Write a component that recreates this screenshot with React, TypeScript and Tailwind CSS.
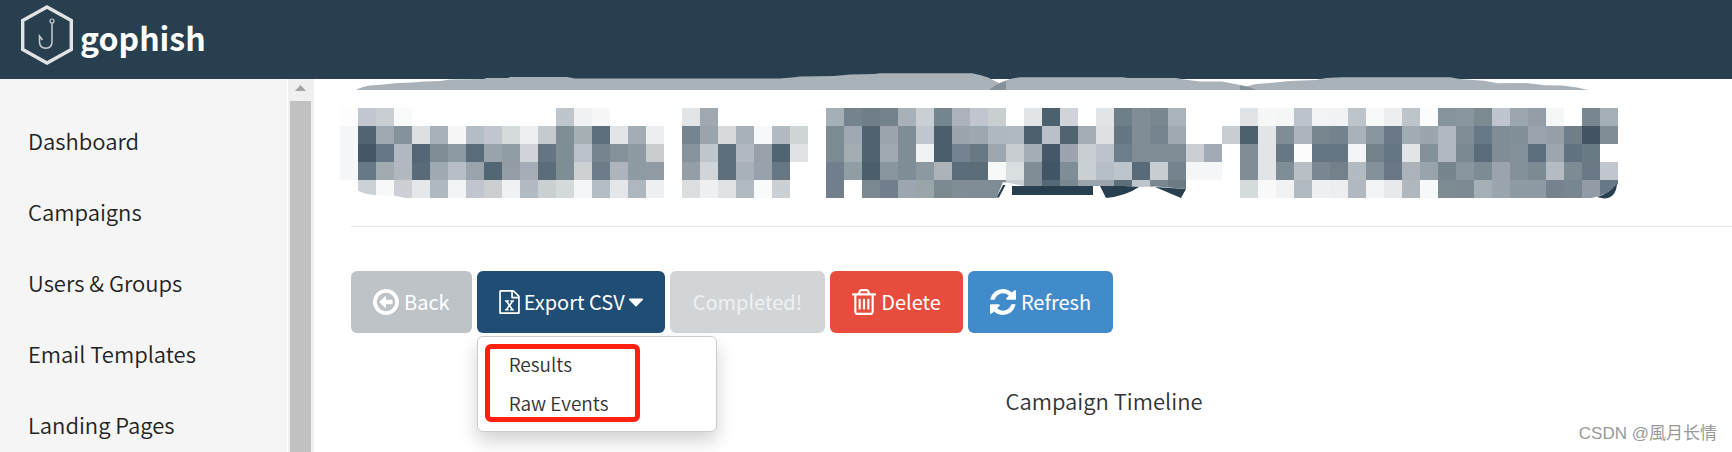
import React from "react";

const navItems = ["Dashboard", "Campaigns", "Users & Groups", "Email Templates", "Landing Pages"];

const CELL = 18;
const MOSAIC_X = 340;
const MOSAIC_Y = 108;

// One string per run of cells: [row, first column, colours]
const mosaic: [number, number, string][] = [
  [0, 0, "fdfdfd c2c7cf c9ced2 f9fbfa"],
  [0, 12, "bfc6cb f0f1f3 f7f7f7"],
  [0, 19, "e1e5e8 9da8b0"],
  [0, 27, "a4b0b5 75838e 6f7e88 74828e a8b0b8 cacfd3 768690 abb2ba c1c5ce c9ced1"],
  [0, 38, "e1e5e8 4d606d d0d4d9"],
  [0, 42, "e1e5e8 6f7f89 808d96 788790 aab2ba"],
  [0, 50, "e0e4e7 f6f8f8 f5f7f7 bcc3cb f2f3f5 f1f2f4 bdc5ca f8faf9 edeef0 bec5ca fbfdfc 87949d 8a969f 7c8a92 bfc5ce 9ba6af 939da7 f5f7f6"],
  [0, 69, "778691 a4b0b5"],
  [1, 0, "f6f7f9 536472 9ea8b1 85929b dce0e3 a8b0b8 f7f7f7 b5bdc4 c1c5ce d5dadd eeeff0 c4cacd 7f8d95 a6b1b6 5e707e e1e5e8 a2aeb4 edeeef"],
  [1, 19, "768490 99a4ab d6dadd a8b0b8 f7f8fa b3bbc2 cfd4d7"],
  [1, 27, "7d8b93 9fa8b2 506270 9ca5ae 7f8d96 bfc6cd 4b5e6c 9ca5ae 9da7b0 afb7c0 b0b9c0 4c606d b9c0c8 516370 a2adb3 dde1e4 667582 808d96 768490 9faab0"],
  [1, 49, "c8cdd1 4d606e e1e5e8 808d96 adb4bc 78868f 73828c a9b1b9 8996a0 6b7886 a0acb1 9ba5ae b1b8c1 808d96 677886 808d96 82909a 9aa3ae 969fa7 707e8a 425463 808d96"],
  [2, 0, "f6f7f9 445665 677786 b1b8bf 556776 808c95 8e9aa3 5a6b7a 99a3ab 919da4 d0d4d8 657582 7f8d95 bac1ca 768490 86929b 8e9ba3 c8cccf"],
  [2, 19, "87939d bfc7cc 5e707d b1b8c0 98a1a9 516472 dfe3e5"],
  [2, 27, "7d8b93 a2adb2 506270 a0a8b2 7f8d96 f0f2f4 4b5e6c 74838f 687984 9ca7b0 c8cdd1 a3aeb4 465867 9ca5af c9ced2 bdc3cb 6e7d8a 808d96 808d96 808d96 cacfd3 a2abb5"],
  [2, 50, "808d96 e1e5e8 677783 fcfcfc 657582 657582 f4f5f7 73818b 657582 e1e5e8 84919a b1b8c1 7b8993 5a6b79 808d96 84919a 5f6f7d 9ca6af 62717f 6a7b85"],
  [3, 0, "f6f7f9 677886 a0acb0 b1b8bf 596a78 9ea9b0 b7bec6 9aa4ac 536674 949da6 a6adb6 5a6d79 7f8d95 cdd1d4 6e7c8a adb4bc 8e9ba3 919ba4"],
  [3, 19, "949ea7 d0d5d9 5e707d a8b0b8 98a2ac 667682"],
  [3, 27, "717f8c 909da4 4b5e6c 89969f 7f8d96 8c99a1 abb2b8 5b6d79 5a6c78 f7f9f8 d9dee0 808d96 425565 7f8d96 cacfd3 b5bdc6 bdc5cc 596a78 c8cdd1 74838e f5f6f8 f5f6f8"],
  [3, 50, "808d96 e1e5e8 7f8d96 b8c0c6 7a8792 74818b b3bbc2 84919b 6a7785 abb2ba 98a3ac 76858e 8996a0 7d8b94 9aa3ae 84919a 7c8a93 b4bbc3 7d8b94 6b7885 c1c5ce"],
  [4, 1, "ccd1d5 f8f8f8 ccd0d4 e5e8ea b0b8bf f2f3f5 c1c5cd cbcfd2 f0f1f3 b3bbc2 cacfd2 d4d9dc f5f6f8 b5bdc4 e3e7e9 afb7be eff0f1"],
  [4, 19, "dadee1 eff0f2 dfe3e5 b2bac1 f9fbfa cbd0d4"],
  [4, 27, "717f8c ffffff 7a8991 717f8c 9ca6b0 9aa5aa 7b8991 808d96 7f8b95 7f8c95 c9ced2 808d96 566776 788790 9aa4ad 9aa4ad 5c6e79 bdc5cc 7a8790 6c7a84"],
  [4, 50, "d5dadd f9f9fa f1f2f4 b1b9c1 eff0f2 edeef0 b1b8bf f2f3f5 e8e9eb b0b8be f7f8fa 7d8b93 7e8a93 a4b0b5 9ba5ae 8e9ba4 8e9ba4 76838f 778691 939ca6 677886"],
];

function RedactedTitle() {
  return (
    <svg
      viewBox="351 79 1268 120"
      width="1268"
      height="120"
      className="block max-w-none overflow-visible"
      role="img"
      aria-label="Redacted campaign title"
    >
      <path
        fill="#a9b1b9"
        d="M356 90L359 88.5 363 87 370 85.5 384 84.5 395 83.3 412 82.6 424 81.5 440 81 450 79.5 484 79 486 78 508 78 510 77H567L575 78.4H780L792 77.6 800 76.4 834 76 850 74.5 874 74 880 73.2H972L980 75 988 77.5 999 83 1004 81.3 1010 79 1020 77.2H1122L1128 78H1176L1184 79.5 1200 81.5 1222 81.5 1235 84 1247 86.3 1256 84 1270 83 1290 81 1316 80 1326 78 1342 77.2H1450L1460 79 1484 80.8 1498 83.3 1526 83 1545 85.2 1562 85.6 1577 87.5 1588 90Z"
      />
      <path fill="#84919a" d="M989 90L996 85 1006 81V90ZM1240 85.5L1249 87 1256 90H1240Z" />
      <g shapeRendering="crispEdges">
        {mosaic.map(([row, col, colours]) =>
          colours.split(" ").map((c, i) => (
            <rect
              key={`${row}-${col + i}`}
              x={MOSAIC_X + (col + i) * CELL}
              y={MOSAIC_Y + row * CELL}
              width={CELL}
              height={CELL}
              fill={`#${c}`}
            />
          ))
        )}
      </g>
      <path fill="#fff" d="M357 190Q364 195 380 195.3L396 196 408 198.5H357Z" />
      <path fill="#fff" d="M996 198.5L1003 182 1024 186H1125L1137 187 1156 186.5 1187 189V199H996Z" />
      <path fill="#fff" d="M1590 198.5Q1608 195 1619 183V199Z" />
      <path
        fill="#283f50"
        d="M996.500 197.500L1003 185H1005.500L999 197.500ZM1012 186H1093V195H1012ZM1100 186L1106 198Q1126 196 1139 187L1125 186ZM1155 187L1181 198 1186 189ZM1597 197Q1608 194 1617 184 1616 198 1604 198.500Z"
      />
    </svg>
  );
}

function Glyph({ box, className, d }: { box: string; className: string; d: string }) {
  return (
    <svg viewBox={box} className={className} fill="currentColor" aria-hidden="true">
      <path d={d} />
    </svg>
  );
}

const arrowCircle =
  "M1280 800v192q0 13-9.5 22.5t-22.5 9.5h-352v192q0 14-9 23t-23 9q-12 0-24-10l-319-319q-9-9-9-23t9-23l320-320q9-9 23-9 13 0 22.500 9.500t9.500 22.500v192h352q13 0 22.500 9.500t9.500 22.500zm160 96q0-148-73-273t-198-198-273-73-273 73-198 198-73 273 73 273 198 198 273 73 273-73 198-198 73-273zm224 0q0 209-103 385.500t-279.500 279.500-385.500 103-385.500-103-279.500-279.500-103-385.500 103-385.500 279.500-279.500 385.500-103 385.500 103 279.500 279.500 103 385.500z";
const fileExcel =
  "M1596 380q28 28 48 76t20 88v1152q0 40-28 68t-68 28h-1344q-40 0-68-28t-28-68v-1600q0-40 28-68t68-28h896q40 0 88 20t76 48zm-444-244v376h376q-10-29-22-41l-313-313q-12-12-41-22zm384 1528v-1024h-416q-40 0-68-28t-28-68v-416h-768v1536h1280zm-979-234v106h281v-106h-75l103-161q5-7 10-16.500t7.500-13.500 3.500-4h2q1 4 5 10 2 4 4.500 7.500t6 8 6.500 8.500l107 161h-76v106h291v-106h-68l-192-273 195-282h67v-107h-279v107h74l-103 159q-4 7-10 16.500t-9 13.500l-2 3h-2q-1-4-5-10-6-11-17-23l-106-159h76v-107h-290v107h68l189 272-194 283h-68z";
const trash =
  "M704 736v576q0 14-9 23t-23 9h-64q-14 0-23-9t-9-23v-576q0-14 9-23t23-9h64q14 0 23 9t9 23zm256 0v576q0 14-9 23t-23 9h-64q-14 0-23-9t-9-23v-576q0-14 9-23t23-9h64q14 0 23 9t9 23zm256 0v576q0 14-9 23t-23 9h-64q-14 0-23-9t-9-23v-576q0-14 9-23t23-9h64q14 0 23 9t9 23zm128 724v-948h-896v948q0 22 7 40.500t14.500 27 10.500 8.500h832q3 0 10.500-8.500t14.500-27 7-40.500zm-672-1076h448l-48-117q-7-9-17-11h-317q-10 2-17 11zm928 32v64q0 14-9 23t-23 9h-96v948q0 83-47 143.500t-113 60.500h-832q-66 0-113-58.500t-47-141.500v-952h-96q-14 0-23-9t-9-23v-64q0-14 9-23t23-9h309l70-167q15-37 54-63t79-26h320q40 0 79 26t54 63l70 167h309q14 0 23 9t9 23z";
const refresh =
  "M1639 1056q0 5-1 7-64 268-268 434.500t-478 166.500q-146 0-282.500-55t-243.500-157l-129 129q-19 19-45 19t-45-19-19-45v-448q0-26 19-45t45-19h448q26 0 45 19t19 45-19 45l-137 137q71 66 161 102t187 36q134 0 250-65t186-179q11-17 53-117 8-23 30-23h192q13 0 22.500 9.500t9.500 22.500zm25-800v448q0 26-19 45t-45 19h-448q-26 0-45-19t-19-45 19-45l138-138q-148-137-349-137-134 0-250 65t-186 179q-11 17-53 117-8 23-30 23h-199q-13 0-22.500-9.500t-9.500-22.500v-7q65-268 270-434.500t480-166.500q146 0 284 55.500t245 156.500l130-129q19-19 45-19t45 19 19 45z";
const caretDown =
  "M1408 704q0 26-19 45l-448 448q-19 19-45 19t-45-19l-448-448q-19-19-19-45t19-45 45-19h896q26 0 45 19t19 45z";

const btn = "flex h-[62px] items-center rounded-md text-[20px] text-white";

export default function App() {
  return (
    <div className="flex h-screen flex-col overflow-hidden bg-white font-['Noto_Sans_CJK_SC',sans-serif] text-[#333]">
      <header className="flex h-[79px] shrink-0 items-start bg-[#283f50] pl-[21px] pt-[5px]">
        <a href="#home" className="flex gap-[7px] text-white">
          <svg viewBox="0 0 52 60" className="h-[60px] w-[52px]" fill="none" aria-hidden="true">
            <path d="M26 2L50.300 15.500V44.500L26 58 1.700 44.500V15.500Z" stroke="#e3e3e3" strokeWidth="3.400" />
            <circle cx="31" cy="16" r="2" stroke="#c9cdd0" strokeWidth="1.200" />
            <path
              d="M31 18V36.500C31 41 28.500 43.200 24.800 43.200 20.500 43.200 18.500 40.500 18.500 36.500V31L21.500 35"
              stroke="#c9cdd0"
              strokeWidth="1.500"
            />
          </svg>
          <span className="text-[32px] font-bold leading-[64px]">gophish</span>
        </a>
      </header>

      <div className="flex min-h-0 flex-1">
        <aside className="flex shrink-0 bg-[#f5f5f5]">
          <nav className="w-[287px] overflow-hidden pt-[26px]">
            <ul>
              {navItems.map((item) => (
                <li key={item}>
                  <a href="#nav" className="block pl-7 text-[22px] font-[350] leading-[71px] text-[#222]">
                    {item}
                  </a>
                </li>
              ))}
            </ul>
          </nav>
          <div className="flex w-[27px] flex-col border-l border-white bg-[#f0f0f0] pl-0.5 pr-[3px]" aria-hidden="true">
            <div className="flex h-[22px] shrink-0 items-center justify-center pb-1">
              <svg viewBox="0 0 11 6" className="h-[6px] w-[11px]">
                <path d="M0 6L5.500 0 11 6Z" fill="#a3a3a3" />
              </svg>
            </div>
            <div className="flex-1 bg-[#c1c1c1]" />
          </div>
        </aside>

        <main className="min-w-0 flex-1 pl-[37px]">
          <RedactedTitle />
          <hr className="mt-[27px] border-[#e5e7e8]" />

          <div className="mt-11 flex gap-[5px]">
            <button type="button" className={`${btn} gap-[5px] bg-[#bdc3c7] px-[22px]`}>
              <Glyph box="128 128 1536 1536" className="size-[26px]" d={arrowCircle} />
              Back
            </button>
            <div className="relative">
              <button type="button" aria-expanded="true" className={`${btn} gap-1 bg-[#204d74] px-[22px]`}>
                <Glyph box="128 0 1536 1792" className="h-6 w-[21px]" d={fileExcel} />
                Export CSV
                <Glyph box="384 640 1024 576" className="h-[9px] w-[14px]" d={caretDown} />
              </button>
              <ul className="absolute left-0 top-[65px] w-60 rounded-md border border-[#ccc] bg-white pb-[9px] pt-[7px] text-[19px] font-[350] leading-[39px] shadow-[0_9px_18px_rgba(0,0,0,0.175)]">
                <li>
                  <a href="#results" className="block pl-[31px]">Results</a>
                </li>
                <li>
                  <a href="#events" className="block pl-[31px]">Raw Events</a>
                </li>
                <li
                  aria-hidden="true"
                  className="pointer-events-none absolute left-[7px] top-[7px] h-[78px] w-[155px] rounded-md border-5 border-[#ff2010]"
                />
              </ul>
            </div>
            <button type="button" disabled className={`${btn} bg-[#d1d5d8] px-[23px]`}>
              <span className="text-[#eff1f2]">Completed!</span>
            </button>
            <button type="button" className={`${btn} gap-[5px] bg-[#e74c3c] px-[22px]`}>
              <Glyph box="192 128 1408 1536" className="h-[26px] w-6" d={trash} />
              Delete
            </button>
            <button type="button" className={`${btn} gap-[5px] bg-[#428bca] px-[22px]`}>
              <Glyph box="128 128 1536 1536" className="size-[26px]" d={refresh} />
              Refresh
            </button>
          </div>

          <div className="mt-12 flex justify-center pl-[125px]">
            <h2 className="text-[22px] font-[350] leading-[38px]">Campaign Timeline</h2>
          </div>
        </main>
      </div>

      <p className="absolute bottom-1 right-[15px] text-[17px] leading-7 text-[#999] font-['Liberation_Sans','Noto_Sans_CJK_SC',sans-serif]">
        CSDN @風月长情
      </p>
    </div>
  );
}
